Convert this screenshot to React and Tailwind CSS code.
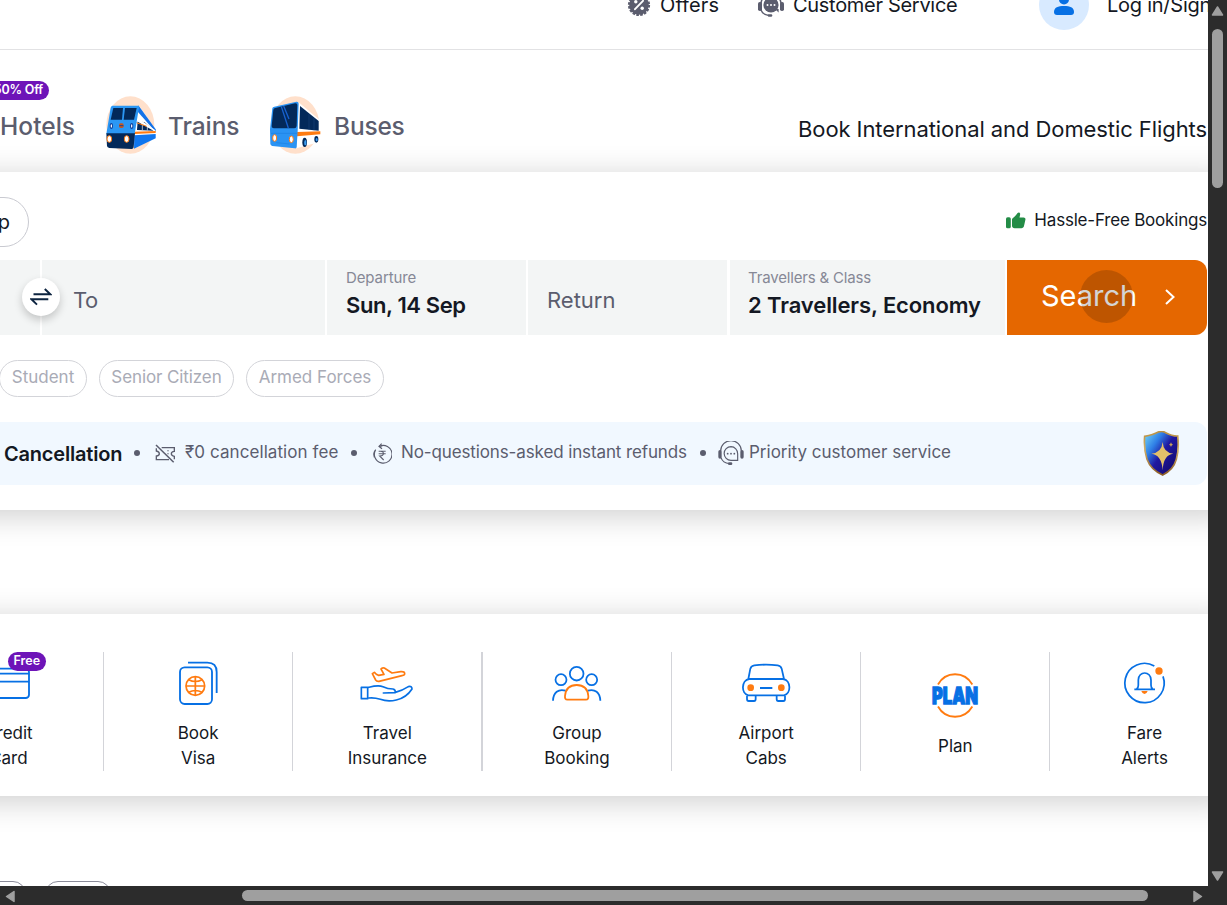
import React from "react";

const BLUE = "#0770e4";
const ORANGE = "#ff7b10";

function PercentBadge() {
  return (
    <svg width="24" height="24" viewBox="0 0 24 24" className="shrink-0">
      <circle cx="12" cy="12" r="9.8" fill="#5b5d6e" />
      <circle cx="12" cy="12" r="10" fill="none" stroke="#5b5d6e" strokeWidth="2.2" strokeDasharray="2.6 1.33" />
      <path d="M8 16.2 16 7.8" stroke="#fff" strokeWidth="1.9" strokeLinecap="round" />
      <circle cx="8.8" cy="8.8" r="1.7" fill="#fff" />
      <circle cx="15.2" cy="15.2" r="1.7" fill="#fff" />
    </svg>
  );
}

function HeadsetSolid() {
  return (
    <svg width="28" height="28" viewBox="0 0 28 28" className="shrink-0">
      <path d="M4 13a10 10 0 0 1 20 0" fill="none" stroke="#5b5d6e" strokeWidth="1.5" />
      <circle cx="14" cy="14" r="7.6" fill="#5b5d6e" />
      <path d="M18 18h3.6v3.6Z" fill="#5b5d6e" />
      <rect x="1" y="11" width="4" height="9" rx="1.8" fill="#5b5d6e" />
      <rect x="23" y="11" width="4" height="9" rx="1.8" fill="#5b5d6e" />
      <path d="M4 19c1.400 3.500 4.500 5.200 8 5.500" fill="none" stroke="#5b5d6e" strokeWidth="1.4" />
      <rect x="10.800" y="23.200" width="4.500" height="2.500" rx="1.200" fill="#5b5d6e" />
      <circle cx="10.500" cy="14" r="1" fill="#fff" />
      <circle cx="14" cy="14" r="1" fill="#fff" />
      <circle cx="17.500" cy="14" r="1" fill="#fff" />
    </svg>
  );
}

function TrainIcon() {
  return (
    <svg width="54" height="60" viewBox="312 76 162 180" className="shrink-0">
      <ellipse cx="391" cy="163" rx="72" ry="86" fill="#ffe0cb" />
      <path d="M417 105 467 178V200L402 234 398 185Z" fill="#fff" />
      <path d="M415 104 467 176V184L412 122Z" fill="#1372e8" />
      <path d="M413 150 434 155 461 180 411 178Z" fill="#03295a" />
      <path d="M427 153v25M442 163v16" stroke="#fff" strokeWidth="2" />
      <path d="M410 140 465 178 467 184 408 150Z" fill="#fff" />
      <path d="M409 156 440 167" stroke={ORANGE} strokeWidth="3" />
      <path d="M402 183 467 181V187L402 190Z" fill={ORANGE} />
      <path d="M403 194 467 190V203L402 234Z" fill="#0f76ef" />
      <path d="M337 105H414Q418 105 417 110L404 190H319L332 111Q333 106 337 105Z" fill="#2b97f4" />
      <path d="M340 112H369L366 147H332Z" fill="#03295a" />
      <path d="M375 112H410L402 147H371Z" fill="#03295a" />
      <path d="M319 188H405L401 230Q400 235 395 235L328 232Q322 231 321 226Z" fill="#03295a" />
      <ellipse cx="334" cy="166" rx="5" ry="9" fill="#1245a0" />
      <ellipse cx="334" cy="166" rx="2" ry="5" fill="#fff" />
      <ellipse cx="395" cy="166" rx="5" ry="9" fill="#1245a0" />
      <ellipse cx="395" cy="166" rx="2" ry="5" fill="#fff" />
      <rect x="357" y="158" width="14" height="14" rx="5" fill="#c8571e" />
      <path d="M358 165h12" stroke="#1245a0" strokeWidth="3" />
      <ellipse cx="328" cy="205" rx="7" ry="10" fill="#fff" stroke={ORANGE} strokeWidth="3" />
      <ellipse cx="380" cy="205" rx="7" ry="10" fill="#fff" stroke={ORANGE} strokeWidth="3" />
    </svg>
  );
}

function BusIcon() {
  return (
    <svg width="54" height="60" viewBox="805 76 162 180" className="shrink-0">
      <ellipse cx="887" cy="163" rx="72" ry="86" fill="#ffe0cb" />
      <path d="M896 94 960 148V214L890 233Z" fill="#fff" />
      <path d="M901 106 957 151V180L899 174Z" fill="#03295a" />
      <path d="M928 130v48M943 142v37" stroke="#1c4a80" strokeWidth="1.500" />
      <path d="M892 184 962 182V191L892 197Z" fill={ORANGE} />
      <path d="M824 108 890 93Q897 92 897 99L894 180 891 230Q890 234 885 233L818 226Q813 225 812 220L811 176 818 113Q819 109 824 108Z" fill="#2b93f3" />
      <path d="M827 112 886 98Q893 97 893 103L891 166Q890 173 884 173H822Q815 172 816 166L821 117Q822 113 827 112Z" fill="#03295a" />
      <path d="M845 108 866 172M852 106 868 145" stroke="#1761cf" strokeWidth="4" />
      <path d="M814 188H892M830 216 870 220" stroke="#1c80e0" strokeWidth="2" />
      <ellipse cx="825" cy="202" rx="6" ry="10" fill="#fff" stroke={ORANGE} strokeWidth="3" />
      <ellipse cx="875" cy="206" rx="6" ry="10" fill="#fff" stroke={ORANGE} strokeWidth="3" />
      <ellipse cx="915" cy="215" rx="7" ry="14" fill="#03295a" />
      <ellipse cx="917" cy="216" rx="3.500" ry="8" fill="#3d9df0" />
      <ellipse cx="950" cy="206" rx="6" ry="10" fill="#03295a" />
      <ellipse cx="951" cy="207" rx="3" ry="5" fill="#3d9df0" />
    </svg>
  );
}

function ThumbIcon() {
  return (
    <svg width="20" height="17" viewBox="0 0 20 17" className="mt-0.5 shrink-0">
      <rect x="0" y="5.300" width="4.800" height="11" rx="1.600" fill="#238c46" />
      <path d="M6 7.600C6 6.600 7 6 7.900 5.200 9.200 4 10.600 2.400 11.600 1 12.300 0 14.200 .300 14.200 2 14.200 3.200 13.700 4.400 13.500 5.400H17.600C19 5.400 19.700 6.500 19.400 7.800L18 14C17.600 15.400 16.800 16.200 15.400 16.200H8.600C7 16.200 6 15.300 6 13.800Z" fill="#238c46" />
    </svg>
  );
}

function SwapIcon() {
  return (
    <svg width="22" height="20" viewBox="0 0 22 20">
      <path d="M3.500 7.300H20.300L14.800 2M18.300 12.300H1.500L7 17.600" fill="none" stroke="#0d2440" strokeWidth="1.900" />
    </svg>
  );
}

function TicketOffIcon() {
  return (
    <svg width="20" height="20" viewBox="466 86 60 60" className="shrink-0">
      <path d="M486 97H524V108Q515 109 515 115T524 123V132M508 133H470V122Q479 121 479 115T470 107V99" fill="none" stroke="#5b5d6e" strokeWidth="4" />
      <path d="M469 89 522 141" stroke="#5b5d6e" strokeWidth="4.500" />
      <path d="M505 104v4M505 113v4" stroke="#5b5d6e" strokeWidth="3" />
    </svg>
  );
}

function RefundIcon() {
  return (
    <svg width="20" height="22" viewBox="1117 84 60 66" className="shrink-0">
      <path d="M1128 104A26.500 26.500 0 1 0 1139 94M1139 94 1148 93" fill="none" stroke="#5b5d6e" strokeWidth="3.500" />
      <path d="M1125 107A26 26 0 0 0 1124 127" fill="none" stroke="#5b5d6e" strokeWidth="3.500" />
      <path d="M1146 86 1138 94 1147 101" fill="none" stroke="#5b5d6e" strokeWidth="3.500" />
      <path d="M1137 109H1158M1137 116H1158M1141 109C1155 108 1155 123 1140 123L1152 135" fill="none" stroke="#5b5d6e" strokeWidth="3.200" />
    </svg>
  );
}

function HeadsetOutline() {
  return (
    <svg width="26" height="25" viewBox="52 80 78 75" className="shrink-0">
      <path d="M60 110A31 31 0 0 1 122 110" fill="none" stroke="#5b5d6e" strokeWidth="3.500" />
      <path d="M91 97A20.500 20.500 0 1 0 91 138H111V118A20.500 20.500 0 0 0 91 97Z" fill="none" stroke="#5b5d6e" strokeWidth="3.500" />
      <rect x="53" y="107" width="10" height="26" rx="5" fill="#5b5d6e" />
      <rect x="119" y="107" width="10" height="26" rx="5" fill="#5b5d6e" />
      <path d="M61 130C65 142 74 147 86 148" fill="none" stroke="#5b5d6e" strokeWidth="3.500" />
      <rect x="82" y="144" width="13" height="8" rx="4" fill="#5b5d6e" />
      <circle cx="81" cy="118" r="2.700" fill="#5b5d6e" />
      <circle cx="91" cy="118" r="2.700" fill="#5b5d6e" />
      <circle cx="101" cy="118" r="2.700" fill="#5b5d6e" />
    </svg>
  );
}

function ShieldIcon() {
  return (
    <svg width="37" height="46" viewBox="190 32 111 138" className="shrink-0">
      <defs>
        <linearGradient id="shieldFill" x1="0" y1="0" x2="0.900" y2="0.800">
          <stop offset="0.050" stopColor="#6fd0f5" />
          <stop offset="0.350" stopColor="#2f7fe6" />
          <stop offset="0.600" stopColor="#2018a0" />
          <stop offset="1" stopColor="#150c72" />
        </linearGradient>
        <linearGradient id="shieldRim" x1="0" y1="0" x2="0" y2="1">
          <stop offset="0" stopColor="#b98f42" />
          <stop offset="0.400" stopColor="#d3b068" />
          <stop offset="1" stopColor="#8a5a25" />
        </linearGradient>
      </defs>
      <path d="M195 48C212 45 225 41 236 35Q247 31 256 36C268 42 279 48 294 47C297 70 297 92 290 117C284 139 268 155 249 164C228 155 210 139 202 117C194 92 193 70 195 48Z" fill="url(#shieldFill)" stroke="url(#shieldRim)" strokeWidth="5" />
      <path d="M249 65Q251 97 281 100Q251 103 249 150Q246 103 215 100Q246 97 249 65Z" fill="#e3c06a" />
      <path d="M274 66Q275 72 280 73Q275 74 274 80Q273 74 268 73Q273 72 274 66Z" fill="#c9a25a" />
    </svg>
  );
}

function CardGlyph() {
  return (
    <svg width="64" height="64" viewBox="-70 36 192 192" fill="none" stroke={BLUE} strokeWidth="5.500">
      <rect x="-38" y="86" width="127" height="88" rx="10" />
      <path d="M-38 101H89M-38 125H89" />
      <path d="M-22 148H0" stroke={ORANGE} />
    </svg>
  );
}

function VisaGlyph() {
  return (
    <svg width="64" height="64" viewBox="498 36 192 192" fill="none" stroke={BLUE} strokeWidth="5.500">
      <rect x="540" y="82" width="96" height="110" rx="14" />
      <path d="M564 68H622Q650 68 650 96V159" />
      <g stroke={ORANGE} strokeWidth="5.200">
        <circle cx="586" cy="138" r="28" />
        <path d="M586 110V166M558 138H614M566 119Q586 130 606 119M566 157Q586 146 606 157" />
      </g>
    </svg>
  );
}

function InsuranceGlyph() {
  return (
    <svg width="64" height="64" viewBox="1066 36 192 192" fill="none" stroke={BLUE} strokeWidth="5" strokeLinejoin="round" strokeLinecap="round">
      <path d="M1118 101 1124 97Q1129 104 1137 106L1153 103 1144 87Q1147 82 1154 84L1177 99 1203 95Q1214 94 1215 100T1207 107L1138 124Q1131 125 1128 120Z" stroke={ORANGE} />
      <rect x="1085" y="142" width="19" height="34" />
      <path d="M1107 142C1122 138 1136 134 1150 140C1158 144 1166 147 1180 147Q1188 149 1187 158L1151 159M1187 157C1200 154 1214 148 1226 140Q1237 137 1237 147C1226 164 1208 176 1190 180Q1164 186 1142 178Q1124 172 1107 174" />
    </svg>
  );
}

function GroupGlyph() {
  return (
    <svg width="64" height="64" viewBox="284 36 192 192" fill="none" stroke={BLUE} strokeWidth="5.300">
      <circle cx="379" cy="101" r="20.500" />
      <circle cx="332" cy="119" r="16.500" />
      <circle cx="424" cy="119" r="16.500" />
      <path d="M308 182C309 158 324 145 346 152M450 182C449 158 434 145 412 152" />
      <path d="M344 168C346 146 360 135 379 135S412 146 414 168Q415 179 407 179H351Q343 179 344 168Z" stroke={ORANGE} />
    </svg>
  );
}

function CabGlyph() {
  return (
    <svg width="64" height="64" viewBox="852 36 192 192" fill="none" stroke={BLUE} strokeWidth="5.300">
      <path d="M895 117 901 86Q904 77 913 76Q948 72 983 76Q992 77 995 86L1002 117" />
      <path d="M898 117H999C1024 120 1024 162 1002 166H895C873 162 873 120 898 117Z" />
      <path d="M891 167V178Q891 183 896 183H912Q917 183 917 178V167M980 167V178Q980 183 985 183H1000Q1005 183 1005 178V167M930 144H967" />
      <circle cx="902" cy="143" r="10" fill={ORANGE} stroke="none" />
      <circle cx="994" cy="143" r="10" fill={ORANGE} stroke="none" />
    </svg>
  );
}

function PlanGlyph() {
  return (
    <svg width="64" height="64" viewBox="190 73.500 192 192" fill="none">
      <path d="M235 132C258 91 314 91 338 132M235 198C258 239 314 239 338 198" stroke={ORANGE} strokeWidth="5.500" />
      <text x="217" y="190" fontFamily="Inter, sans-serif" fontWeight="900" fontSize="67" fill={BLUE} stroke={BLUE} strokeWidth="4" textLength="138" lengthAdjust="spacingAndGlyphs">
        PLAN
      </text>
    </svg>
  );
}

function AlertGlyph() {
  return (
    <svg width="64" height="64" viewBox="758 36 192 192" fill="none" stroke={BLUE} strokeWidth="5.200">
      <path d="M882 78A59 59 0 1 0 908 109" />
      <path d="M822 148H884M829 147Q834 143 834 136V120C834 92 872 92 872 120V136Q872 143 877 147" />
      <path d="M843 153H862Q859 162 852.500 162T843 153Z" fill={ORANGE} stroke="none" />
      <circle cx="896" cy="93" r="11" fill={ORANGE} stroke="none" />
    </svg>
  );
}

function Dot() {
  return <span className="-mt-px size-1.5 shrink-0 rounded-full bg-[#5b5d6e]" />;
}

const services = [
  { lines: ["Credit", "Card"], Icon: CardGlyph, edge: "", badge: "Free" },
  { lines: ["Book", "Visa"], Icon: VisaGlyph, edge: "border-l" },
  { lines: ["Travel", "Insurance"], Icon: InsuranceGlyph, edge: "border-l" },
  { lines: ["Group", "Booking"], Icon: GroupGlyph, edge: "border-l-2" },
  { lines: ["Airport", "Cabs"], Icon: CabGlyph, edge: "border-l pl-px" },
  { lines: ["Plan"], Icon: PlanGlyph, edge: "border-l pl-px" },
  { lines: ["Fare", "Alerts"], Icon: AlertGlyph, edge: "border-l pl-px" },
];

function Header() {
  return (
    <header className="h-[50px] shrink-0 border-b border-[#e2e2e4] bg-white">
      <div className="-mt-5 flex h-[50px] items-center pl-[627px] text-[20px] leading-6">
        <PercentBadge />
        <span className="-mt-px ml-[9px] w-[97px] shrink-0 tracking-[0.1px]">Offers</span>
        <HeadsetSolid />
        <span className="-mt-px ml-2 w-[246px] shrink-0 tracking-[-0.3px]">Customer Service</span>
        <span className="flex size-[50px] shrink-0 items-center justify-center rounded-full bg-[#d8eaff]">
          <svg width="22" height="22" viewBox="0 0 22 22">
            <circle cx="11" cy="5.500" r="5" fill={BLUE} />
            <path d="M1 18C1 13.500 5 12 11 12S21 13.500 21 18Q21 21 18 21H4Q1 21 1 18Z" fill={BLUE} />
          </svg>
        </span>
        <span className="ml-[18px] shrink-0 tracking-[-0.25px]">Log in/Signup</span>
      </div>
    </header>
  );
}

function Products() {
  return (
    <nav className="relative flex h-[122px] shrink-0 items-center pt-[30px] text-[24.500px] font-medium text-[#5b5d6e]">
      <span className="absolute top-[31px] left-0 flex h-[19px] w-[49px] justify-end rounded-r-full bg-[#6e14b8] pr-[6px] text-[12.500px] leading-[17px] font-semibold tracking-[-0.2px] text-white">
        50% Off
      </span>
      <span className="flex w-[75px] justify-end">Hotels</span>
      <span className="ml-[29px] flex w-[164px] items-center gap-2.5">
        <TrainIcon />
        <span className="tracking-[-0.1px]">Trains</span>
      </span>
      <span className="flex items-center gap-3">
        <BusIcon />
        <span className="tracking-[-0.2px]">Buses</span>
      </span>
      <h1 className="mt-[7px] mr-px ml-auto text-[22px] font-normal tracking-[-0.08px] text-[#141823]">
        Book International and Domestic Flights
      </h1>
    </nav>
  );
}

function SearchCard() {
  return (
    <section className="-mr-6 -ml-16 flex h-[338px] shrink-0 flex-col bg-white pr-6 pl-16 shadow-[0_5px_30px_rgba(0,0,0,0.2)]">
      <div className="flex h-[88px] items-start justify-between pt-[25px]">
        <span className="-ml-[110px] flex h-[50px] w-[139px] items-center justify-end rounded-full border border-[#c9cad1] pr-[18px] text-[20px]">
          Round Trip
        </span>
        <span className="mt-[13px] mr-px flex items-center gap-2 text-[17px] leading-[18px] tracking-[-0.2px]">
          <ThumbIcon />
          <span>Hassle-Free Bookings</span>
        </span>
      </div>

      <div className="flex h-[75px] shrink-0">
        <div className="w-10 bg-[#f3f5f5]" />
        <div className="relative ml-0.5 flex w-[283px] items-center bg-[#f3f5f5] pt-1.5 pl-[31px] text-[22px] tracking-[-0.4px] text-[#5b5d6e]">
          <span className="absolute top-[18px] -left-5 flex size-[38px] items-center justify-center rounded-full bg-white shadow-[0_4px_8px_rgba(0,0,0,0.2)]">
            <SwapIcon />
          </span>
          To
        </div>
        <div className="ml-0.5 w-[199px] bg-[#f3f5f5] pt-2 pl-[19px]">
          <p className="text-[15px] leading-5 tracking-[-0.1px] text-[#868896]">Departure</p>
          <p className="mt-0.5 text-[22px] leading-[30px] font-semibold tracking-[-0.38px]">Sun, 14 Sep</p>
        </div>
        <div className="ml-0.5 flex w-[199px] items-center bg-[#f3f5f5] pt-1.5 pl-[19px] text-[22px] text-[#5b5d6e]">Return</div>
        <div className="ml-[3px] w-[275px] bg-[#f3f5f5] pt-2 pl-[18px]">
          <p className="text-[15px] leading-5 tracking-[-0.17px] text-[#868896]">Travellers &amp; Class</p>
          <p className="mt-0.5 text-[22px] leading-[30px] font-semibold tracking-[-0.1px]">2 Travellers, Economy</p>
        </div>
        <button className="relative ml-0.5 flex w-[200px] items-center rounded-r-xl bg-[#e56700] pb-[3px] pl-[34px] text-[29px] text-white">
          <span className="w-[123px] text-left">Search</span>
          <svg width="12" height="18" viewBox="0 0 12 18" className="mt-0.5">
            <path d="M2 2 9.500 9 2 16" fill="none" stroke="#fff" strokeWidth="2" />
          </svg>
          <span className="absolute top-[10px] left-[73px] size-[53px] rounded-full bg-black/17" />
        </button>
      </div>

      <div className="mt-[25px] -ml-px flex h-[37px] shrink-0 gap-3 text-[17px] leading-[33px] text-[#a9abb6]">
        <span className="w-[88px] rounded-full border border-[#d3d4d9] text-center">Student</span>
        <span className="w-[135px] rounded-full border border-[#d3d4d9] text-center tracking-[-0.1px]">Senior Citizen</span>
        <span className="w-[138px] rounded-full border border-[#d3d4d9] text-center">Armed Forces</span>
      </div>

      <div className="mt-[25px] mr-px flex h-[63px] shrink-0 items-center rounded-r-xl bg-[#f1f8ff] pl-1 text-[17px] text-[#5b5d6e]">
        <span className="w-[130px] text-[20px] font-semibold tracking-[-0.2px] text-[#141823]">Cancellation</span>
        <Dot />
        <span className="ml-[15px] flex w-[196px] items-center gap-[10px]">
          <TicketOffIcon />
          <span className="-mt-px tracking-[0.08px]">₹0 cancellation fee</span>
        </span>
        <Dot />
        <span className="ml-[15px] flex w-[328px] items-center gap-[9px]">
          <RefundIcon />
          <span className="-mt-px tracking-[-0.12px]">No-questions-asked instant refunds</span>
        </span>
        <Dot />
        <span className="ml-3 flex items-center gap-[5px]">
          <HeadsetOutline />
          <span className="-mt-px">Priority customer service</span>
        </span>
        <span className="mr-[27px] ml-auto">
          <ShieldIcon />
        </span>
      </div>
    </section>
  );
}

function Services() {
  return (
    <section className="mt-[104px] -mr-6 -ml-16 h-[182px] shrink-0 bg-white pt-[38px] pl-16 shadow-[0_5px_30px_rgba(0,0,0,0.2)]">
      <div className="-ml-[86.2px] flex">
        {services.map(({ lines, Icon, edge, badge }) => (
          <div key={lines[0]} className={"relative flex h-[119px] w-[189.2px] shrink-0 flex-col items-center justify-center border-[#d3d4d9] " + edge}>
            <Icon />
            <p className="mt-[5px] text-center text-[17px] leading-[25px]">
              {lines.map((line) => (
                <span key={line} className="block">{line}</span>
              ))}
            </p>
            {badge && (
              <span className="absolute top-0 left-[94px] h-[19px] w-[38px] rounded-full bg-[#6e14b8] text-center text-[12.500px] leading-[18px] font-semibold text-white">
                {badge}
              </span>
            )}
          </div>
        ))}
      </div>
    </section>
  );
}

export default function App() {
  return (
    <div className="flex h-[905px] w-[1227px] flex-col overflow-hidden bg-[#2c2c2c] font-['Inter',sans-serif] whitespace-nowrap text-[#141823]">
      <div className="flex h-[886px]">
        <main className="flex w-[1208px] shrink-0 flex-col overflow-hidden bg-white">
          <Header />
          <Products />
          <SearchCard />
          <Services />
          <div className="mt-[85px] flex h-10 shrink-0 gap-[19px]">
            <span className="-ml-10 w-[66px] shrink-0 rounded-[13px] border border-[#8a8b99]" />
            <span className="w-[66px] shrink-0 rounded-[13px] border border-[#8a8b99]" />
          </div>
        </main>
        <div className="flex w-[19px] flex-col items-center">
          <svg width="13" height="10" viewBox="0 0 13 10" className="mt-1.5">
            <path d="M6.500 1 11.500 9H1.500Z" fill="#9f9f9f" stroke="#9f9f9f" strokeWidth="1.500" strokeLinejoin="round" />
          </svg>
          <div className="mt-[13px] h-[159px] w-[11px] rounded-full bg-[#9f9f9f]" />
          <svg width="13" height="10" viewBox="0 0 13 10" className="mt-auto mb-[5px]">
            <path d="M6.500 9 11.500 1H1.500Z" fill="#9f9f9f" stroke="#9f9f9f" strokeWidth="1.500" strokeLinejoin="round" />
          </svg>
        </div>
      </div>
      <div className="flex h-[19px] items-center pl-[5px]">
        <svg width="10" height="13" viewBox="0 0 10 13" className="mt-px">
          <path d="M1.500 6.500 9 1.500V11.500Z" fill="#9f9f9f" stroke="#9f9f9f" strokeWidth="1.500" strokeLinejoin="round" />
        </svg>
        <div className="ml-[227px] h-[11px] w-[906px] rounded-full bg-[#9f9f9f]" />
        <svg width="10" height="13" viewBox="0 0 10 13" className="mt-px ml-[45px]">
          <path d="M8.500 6.500 1 1.500V11.500Z" fill="#9f9f9f" stroke="#9f9f9f" strokeWidth="1.500" strokeLinejoin="round" />
        </svg>
      </div>
    </div>
  );
}
